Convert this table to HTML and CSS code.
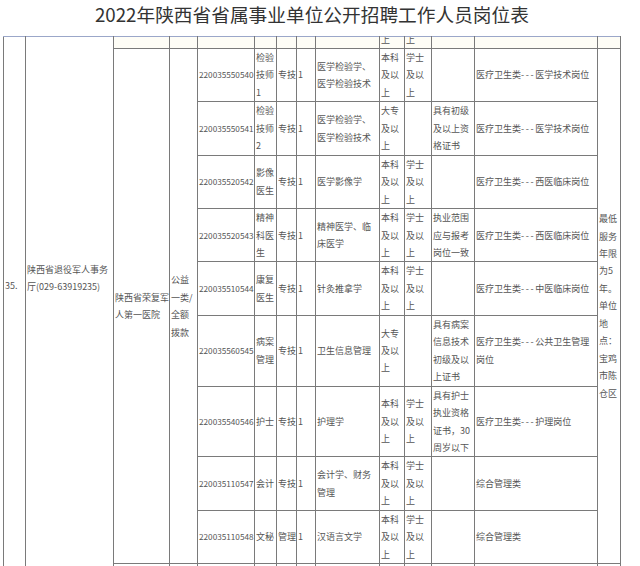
FILE: index.html
```html
<!DOCTYPE html>
<html lang="zh">
<head>
<meta charset="utf-8">
<title>2022年陕西省省属事业单位公开招聘工作人员岗位表</title>
<link rel="stylesheet" href="styles.css">
</head>
<body>
<div class="title">2022年陕西省省属事业单位公开招聘工作人员岗位表</div>
<div class="wrap">
<table class="grid">
<colgroup>
<col class="c-no"><col class="c-dept"><col class="c-unit"><col class="c-fund"><col class="c-code"><col class="c-name"><col class="c-type"><col class="c-num"><col class="c-major"><col class="c-edu"><col class="c-deg"><col class="c-other"><col class="c-exam"><col class="c-note">
</colgroup>
<tr class="top">
<td rowspan="11" class="span no">35.</td>
<td rowspan="11" class="span dept">陕西省退役军人事务<br>厅(029-63919235)</td>
<td class="cut"></td><td class="cut"></td><td class="cut"></td><td class="cut"></td><td class="cut"></td><td class="cut"></td><td class="cut"></td>
<td class="cut"><div class="frag"><span>上</span></div></td>
<td class="cut"><div class="frag"><span>上</span></div></td>
<td class="cut"></td><td class="cut"></td><td class="cut"></td>
</tr>
<tr>
<td rowspan="9">陕西省荣复军<br>人第一医院</td>
<td rowspan="9">公益<br>一类/<br>全额<br>拨款</td>
<td class="code">220035550540</td><td>检验<br>技师<br>1</td><td>专技</td><td>1</td><td>医学检验学、<br>医学检验技术</td><td>本科<br>及以<br>上</td><td>学士<br>及以<br>上</td><td></td><td>医疗卫生类<span class="d">---</span>医学技术岗位</td>
<td rowspan="9">最低<br>服务<br>年限<br>为5<br>年。<br>单位<br>地<br>点：<br>宝鸡<br>市陈<br>仓区</td>
</tr>
<tr>
<td class="code">220035550541</td><td>检验<br>技师<br>2</td><td>专技</td><td>1</td><td>医学检验学、<br>医学检验技术</td><td>大专<br>及以<br>上</td><td></td><td>具有初级<br>及以上资<br>格证书</td><td>医疗卫生类<span class="d">---</span>医学技术岗位</td>
</tr>
<tr>
<td class="code">220035520542</td><td>影像<br>医生</td><td>专技</td><td>1</td><td>医学影像学</td><td>本科<br>及以<br>上</td><td>学士<br>及以<br>上</td><td></td><td>医疗卫生类<span class="d">---</span>西医临床岗位</td>
</tr>
<tr>
<td class="code">220035520543</td><td>精神<br>科医<br>生</td><td>专技</td><td>1</td><td>精神医学、临<br>床医学</td><td>本科<br>及以<br>上</td><td>学士<br>及以<br>上</td><td>执业范围<br>应与报考<br>岗位一致</td><td>医疗卫生类<span class="d">---</span>西医临床岗位</td>
</tr>
<tr>
<td class="code">220035510544</td><td>康复<br>医生</td><td>专技</td><td>1</td><td>针灸推拿学</td><td>本科<br>及以<br>上</td><td>学士<br>及以<br>上</td><td></td><td>医疗卫生类<span class="d">---</span>中医临床岗位</td>
</tr>
<tr>
<td class="code">220035560545</td><td>病案<br>管理</td><td>专技</td><td>1</td><td>卫生信息管理</td><td>大专<br>及以<br>上</td><td></td><td>具有病案<br>信息技术<br>初级及以<br>上证书</td><td>医疗卫生类<span class="d">---</span>公共卫生管理<br>岗位</td>
</tr>
<tr>
<td class="code">220035540546</td><td>护士</td><td>专技</td><td>1</td><td>护理学</td><td>本科<br>及以<br>上</td><td>学士<br>及以<br>上</td><td>具有护士<br>执业资格<br>证书，30<br>周岁以下</td><td>医疗卫生类<span class="d">---</span>护理岗位</td>
</tr>
<tr>
<td class="code">220035110547</td><td>会计</td><td>专技</td><td>1</td><td>会计学、财务<br>管理</td><td>本科<br>及以<br>上</td><td>学士<br>及以<br>上</td><td></td><td>综合管理类</td>
</tr>
<tr>
<td class="code">220035110548</td><td>文秘</td><td>管理</td><td>1</td><td>汉语言文学</td><td>本科<br>及以<br>上</td><td>学士<br>及以<br>上</td><td></td><td>综合管理类</td>
</tr>
<tr class="next">
<td></td><td></td><td></td><td></td><td></td><td></td><td></td><td></td><td></td><td></td><td></td><td></td>
</tr>
</table>
</div>
</body>
</html>
```

FILE: styles.css
```css
html, body {
  margin: 0;
  padding: 0;
  background: #ffffff;
}
body {
  width: 640px;
  height: 566px;
  overflow: hidden;
  font-family: "Noto Sans CJK SC", "Noto Sans", sans-serif;
  color: #555555;
}
.title {
  height: 36px;
  line-height: 27px;
  font-size: 18.7px;
  color: #333333;
  padding-left: 95px;
  white-space: nowrap;
}
.wrap {
  padding-left: 3px;
}
.grid {
  border-collapse: collapse;
  table-layout: fixed;
  width: 618px;
  font-size: 9px;
  line-height: 17.45px;
}
.grid td {
  border: 1px solid #7a7a7a;
  padding: 0 0 0 1px;
  vertical-align: middle;
  text-align: left;
  white-space: nowrap;
}
.grid td.cut {
  border-top-color: #9ba7c9;
  height: 11px;
  line-height: 11px;
  background: #fefdf6;
}
.grid td.span {
  border-top-color: #9ba7c9;
  vertical-align: top;
}
.frag {
  height: 11px;
  overflow: hidden;
  display: flex;
  flex-direction: column;
  justify-content: flex-end;
  line-height: 17.45px;
}
.grid td.no {
  padding-top: 240px;
}
.grid td.dept {
  padding-top: 224px;
}
.grid td.code {
  font-size: 8.2px;
}
.grid tr.next td {
  height: 20px;
}
.d {
  letter-spacing: 1.6px;
}
.c-no { width: 22px; }
.c-dept { width: 88px; }
.c-unit { width: 56px; }
.c-fund { width: 28px; }
.c-code { width: 57px; }
.c-name { width: 22px; }
.c-type { width: 20px; }
.c-num { width: 19px; }
.c-major { width: 64px; }
.c-edu { width: 25px; }
.c-deg { width: 27px; }
.c-other { width: 43px; }
.c-exam { width: 123px; }
.c-note { width: 23px; }
```
